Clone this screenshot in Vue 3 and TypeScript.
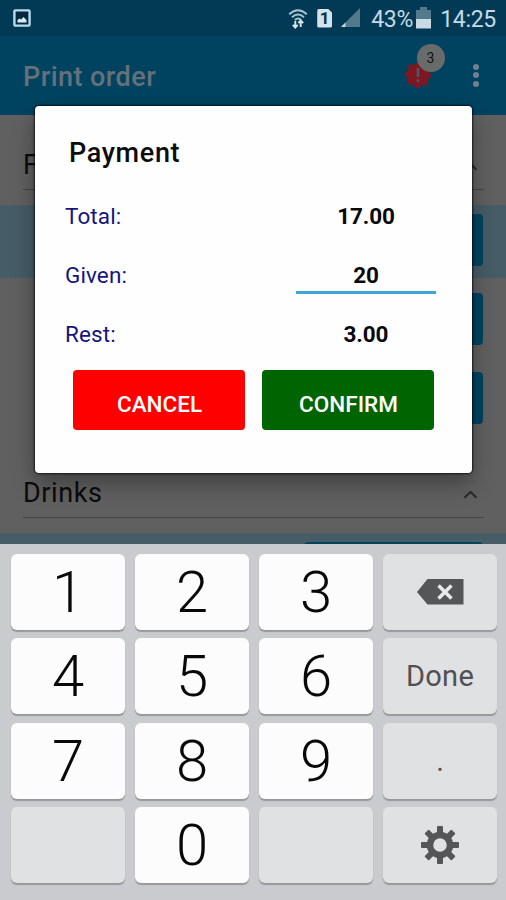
<script setup lang="ts">
import { ref } from 'vue'

interface Key {
  id: string
  label?: string
  icon?: 'erase' | 'gear'
  kind: 'digit' | 'side'
}

const total = '17.00'
const given = ref('20')
const rest = '3.00'

const keys: Key[] = [
  { id: 'k1', label: '1', kind: 'digit' },
  { id: 'k2', label: '2', kind: 'digit' },
  { id: 'k3', label: '3', kind: 'digit' },
  { id: 'erase', icon: 'erase', kind: 'side' },
  { id: 'k4', label: '4', kind: 'digit' },
  { id: 'k5', label: '5', kind: 'digit' },
  { id: 'k6', label: '6', kind: 'digit' },
  { id: 'done', label: 'Done', kind: 'side' },
  { id: 'k7', label: '7', kind: 'digit' },
  { id: 'k8', label: '8', kind: 'digit' },
  { id: 'k9', label: '9', kind: 'digit' },
  { id: 'point', label: '.', kind: 'side' },
  { id: 'blank-left', kind: 'side' },
  { id: 'k0', label: '0', kind: 'digit' },
  { id: 'blank-right', kind: 'side' },
  { id: 'gear', icon: 'gear', kind: 'side' },
]

const teeth = [0, 45, 90, 135, 180, 225, 270, 315]
</script>

<template>
  <div class="screen">
    <header class="status">
      <svg class="picture" width="18" height="18" viewBox="0 0 18 18">
        <rect x="1.4" y="1.4" width="15.2" height="15.2" rx="1" fill="#08283d" stroke="#b5dcee" stroke-width="2.4" />
        <path d="M4.5 13.5V11l2-1.5 1.500 1L10.500 8l3 3v2.500z" fill="#d5edf7" />
      </svg>
      <div class="status-right">
        <svg class="wifi" width="20" height="21" viewBox="0 0 20 21" fill="none" stroke="#a9c3d0" stroke-width="1.900">
          <path d="M1.200 6.200Q10-1.800 18.800 6.200" />
          <path d="M4 9.200Q10 3.700 16 9.200" />
          <path d="M6.800 12Q10 9 13.200 12" />
          <path d="M7.300 19.500V13M4.800 16.800l2.500 2.700 2.400-2.700M12.700 12.500V19M10.400 15l2.300-2.500 2.500 2.500" stroke="#d8e6ec" stroke-width="1.900" />
        </svg>
        <span class="sim">1</span>
        <svg class="signal" width="20" height="20" viewBox="0 0 20 20">
          <path d="M19 0V19H0z" fill="#53798c" />
          <path d="M4.500 14.500V19H0z" fill="#c6d9e2" />
        </svg>
        <span class="percent">43%</span>
        <svg class="battery" width="15" height="22" viewBox="0 0 15 22">
          <path d="M4 0h7v3h4v9H0V3h4z" fill="#53798c" />
          <rect y="12" width="15" height="9.500" fill="#c9dae2" />
        </svg>
        <span class="clock">14:25</span>
      </div>
    </header>

    <div class="appbar">
      <h1>Print order</h1>
      <div class="alert">
        <svg width="30" height="30" viewBox="-15 -15 30 30">
          <g fill="#7e1722">
            <circle r="10.500" />
            <path v-for="a in teeth" :key="a" d="M-5-9L1-14.200 5-9z" :transform="`rotate(${a})`" />
          </g>
          <path d="M0-7V2M0 4.500V7" stroke="#49586b" stroke-width="2.600" />
        </svg>
        <span class="badge">3</span>
      </div>
      <div class="dots"><i /><i /><i /></div>
    </div>

    <main class="page">
      <section class="group">
        <div class="group-head">
          <h2>F</h2>
          <svg width="15" height="9" viewBox="0 0 15 9"><path d="M1.500 7.800l6-6 6 6" /></svg>
        </div>
        <div class="item tinted"><span class="item-button" /></div>
        <div class="item"><span class="item-button" /></div>
        <div class="item"><span class="item-button" /></div>
      </section>
      <section class="group drinks">
        <div class="group-head">
          <h2>Drinks</h2>
          <svg width="15" height="9" viewBox="0 0 15 9"><path d="M1.500 7.800l6-6 6 6" /></svg>
        </div>
        <div class="item tinted"><span class="item-button" /></div>
      </section>
    </main>

    <div class="dialog">
      <h3>Payment</h3>
      <div class="line"><span class="label">Total:</span><b class="amount">{{ total }}</b></div>
      <div class="line"><span class="label">Given:</span><b class="amount field">{{ given }}</b></div>
      <div class="line"><span class="label">Rest:</span><b class="amount">{{ rest }}</b></div>
      <div class="actions">
        <button class="cancel">CANCEL</button>
        <button class="confirm">CONFIRM</button>
      </div>
    </div>

    <div class="keyboard">
      <button v-for="k in keys" :key="k.id" class="key" :class="[k.kind, k.id]">
        <svg v-if="k.icon === 'erase'" width="47" height="26" viewBox="0 0 47 26">
          <path d="M0 13L10.500 0H46.500V25.500H10.500z" fill="#555657" />
          <path d="M21.500 6.500l13 13M34.500 6.500l-13 13" stroke="#e7e8ea" stroke-width="3.600" />
        </svg>
        <svg v-else-if="k.icon === 'gear'" width="40" height="40" viewBox="-20 -20 40 40">
          <g fill="#555657">
            <rect v-for="a in teeth" :key="a" x="-3" y="-19" width="6" height="9" rx="0.800" :transform="`rotate(${a})`" />
          </g>
          <circle r="10" fill="none" stroke="#555657" stroke-width="6.500" />
        </svg>
        <template v-else>{{ k.label }}</template>
      </button>
    </div>
  </div>
</template>

<style>
body {
  margin: 0;
}
</style>

<style scoped>
.screen {
  position: relative;
  display: flex;
  flex-direction: column;
  width: 506px;
  height: 900px;
  overflow: hidden;
  background: #606060;
  font-family: Roboto, "Liberation Sans", sans-serif;
}
h1, h2, h3 {
  margin: 0;
  font-weight: 400;
}
button {
  margin: 0;
  padding: 0;
  border: 0;
  font-family: inherit;
}
svg {
  display: block;
  flex: none;
}
.status {
  flex: none;
  display: flex;
  align-items: center;
  justify-content: space-between;
  height: 36px;
  box-sizing: border-box;
  padding: 0 10px 0 13px;
  background: #023a55;
  color: #c5dae4;
}
.status-right {
  display: flex;
  align-items: center;
}
.sim {
  width: 15px;
  height: 19px;
  margin: 0 9px 0 9px;
  border-radius: 2px;
  background: #d5e2e9;
  clip-path: polygon(0 0, 70% 0, 100% 22%, 100% 100%, 0 100%);
  color: #06344b;
  font-size: 17px;
  font-weight: 700;
  line-height: 19px;
  text-align: center;
}
.percent {
  width: 41px;
  margin: 2px 4px 0 10px;
  font-size: 23px;
  letter-spacing: -0.300px;
  white-space: nowrap;
}
.clock {
  margin: 2px 0 0 9px;
  font-size: 23px;
  letter-spacing: -0.300px;
}
.appbar {
  flex: none;
  display: flex;
  align-items: center;
  height: 79px;
  box-sizing: border-box;
  padding: 2px 27.500px 0 23px;
  background: #004360;
}
.appbar h1 {
  flex: 1;
  color: #65717a;
  font-size: 27px;
  font-weight: 500;
  letter-spacing: 0.450px;
}
.alert {
  position: relative;
  width: 30px;
  height: 30px;
  margin: -3px 40px 0 0;
}
.badge {
  position: absolute;
  left: 14px;
  top: -16px;
  width: 28px;
  height: 28px;
  border-radius: 50%;
  background: #696b6b;
  color: #111;
  font-size: 14px;
  font-weight: 400;
  line-height: 29px;
  text-align: center;
}
.dots {
  display: grid;
  gap: 2.500px;
  margin-top: -3px;
}
.dots i {
  width: 6px;
  height: 6px;
  border-radius: 50%;
  background: #71808a;
}
.page {
  flex: none;
  height: 429px;
  overflow: hidden;
}
.group-head {
  display: flex;
  align-items: center;
  justify-content: space-between;
  height: 51px;
  margin: 24px 22px 15px 23px;
  padding: 1px 6px 0 0;
  box-sizing: border-box;
  border-bottom: 1px solid #464646;
}
.group-head h2 {
  color: #0b0b0b;
  font-size: 27px;
  letter-spacing: 0.600px;
}
.group-head svg {
  margin-top: 4px;
  fill: none;
  stroke: #292929;
  stroke-width: 2;
}
.item {
  display: flex;
  align-items: center;
  justify-content: flex-end;
  height: 73px;
  box-sizing: border-box;
  margin-bottom: 6px;
  padding: 0 23px 3px 0;
}
.tinted {
  background: #465c66;
}
.item-button {
  width: 179px;
  height: 52px;
  border-radius: 4px;
  background: #00435f;
}
.group {
  overflow: hidden;
}
.drinks .group-head {
  margin-top: 25px;
}
.dialog {
  position: absolute;
  left: 35px;
  top: 106px;
  width: 437px;
  height: 367px;
  box-sizing: border-box;
  padding: 17px 36px 0 30px;
  border-radius: 4px;
  background: #fefefe;
  box-shadow: 0 0 2px 1px rgba(0, 0, 15, 0.700), 0 10px 22px rgba(0, 0, 0, 0.350);
}
.dialog h3 {
  height: 63px;
  padding-left: 4px;
  color: #0c0c0c;
  font-size: 27px;
  font-weight: 500;
  letter-spacing: 0.650px;
  line-height: 60px;
}
.line {
  display: flex;
  justify-content: space-between;
  height: 59px;
  line-height: 60px;
}
.line .label {
  color: #15157c;
  font-size: 22.500px;
  letter-spacing: 0.100px;
}
.amount {
  width: 140px;
  height: 49px;
  box-sizing: border-box;
  color: #080808;
  font-size: 22.500px;
  font-weight: 700;
  letter-spacing: -0.100px;
  text-align: center;
}
.field {
  border-bottom: 3px solid #3ba7d2;
}
.actions {
  display: flex;
  gap: 17px;
  padding: 7px 0 0 8px;
}
.actions button {
  width: 172px;
  height: 60px;
  padding-left: 1px;
  border-radius: 4px;
  color: #fff;
  font-size: 22.500px;
  font-weight: 500;
  line-height: 68px;
}
.cancel {
  background: #fe0000;
}
.confirm {
  background: #006400;
}
.keyboard {
  position: relative;
  flex: 1;
  display: grid;
  grid-template-columns: repeat(4, 114px);
  grid-auto-rows: 76px;
  gap: 8.400px 10px;
  align-content: start;
  padding: 10px 9px 0 11px;
  background: #c9cbcf;
}
.key {
  display: flex;
  align-items: center;
  justify-content: center;
  border-radius: 6px;
  box-shadow: 0 2px 1px #96989c;
  color: #080808;
}
.digit {
  background: #fcfcfc;
  font-size: 58px;
  font-weight: 300;
}
.side {
  background: #e0e1e3;
  color: #505152;
  font-size: 29px;
}
.done {
  letter-spacing: 0.300px;
}
</style>
